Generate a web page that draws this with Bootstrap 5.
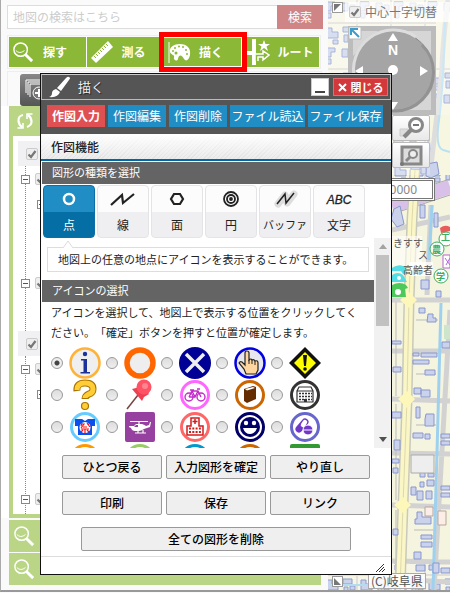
<!DOCTYPE html>
<html lang="ja">
<head>
<meta charset="utf-8">
<meta name="viewport" content="width=device-width, initial-scale=1">
<title>描く</title>
<link rel="stylesheet" href="https://cdn.jsdelivr.net/npm/bootstrap@5.3.0/dist/css/bootstrap.min.css">
<style>
body{font-family:"Noto Sans CJK JP",sans-serif;font-size:12px;line-height:16px;color:#222;background:#fafafa;overflow-x:hidden;text-spacing-trim:space-all}
svg{display:block;flex:none}
.stage{min-height:590px;border-left:1px solid #aaa;border-bottom:2px solid #999}
.side{padding:5px 6px 0 6px;min-width:0}
.search-box{height:24px;margin-right:-1px}
.search-box input{border:1px solid #ddd;border-right:0;font-size:12px;padding:0 5px;min-width:0;background:#fff}
.search-box input::placeholder{color:#ccc}
.search-box button{border:0;background:#cf8586;color:#fff;width:46px}
.main-nav{border:1px solid #eee;padding:1px;gap:1px;margin-top:6px;height:34px;margin-right:1px}
.main-nav button{flex:1 1 0;border:0;background:#8bb837;color:#fff;font-weight:700;padding:0 0 0 3px;gap:8px;white-space:nowrap}
.main-nav .picked{outline:5px solid #f00;outline-offset:0;position:relative;z-index:2;border:1px solid #fff;border-left:0}
.tool-strip{border:1px solid #eee;border-bottom:0;height:35px;margin-top:2px;padding:2px 12px}
.tool-strip button{width:31px;height:32px;border:0;border-radius:3px;padding:5px;background:linear-gradient(#888,#555)}
.tree-panel{background:#b9d585;padding:0 4px 4px;margin:0 1px 0 2px}
.white-gutter{background:#fff;margin:0 0 0 -6px;padding-left:6px}
.refresh{display:block;height:30px;border:0;background:none;padding:0 3px}
.tree{background:#fff;height:378px;padding-top:5px;overflow:hidden}
.tree-head{height:25px;background:#f1f0f2;margin-left:5px;padding-left:8px}
.tree ul{margin:0 0 0 12px;padding:0;border-left:1px dotted #888;list-style:none}
.tree li{height:26px;display:flex;align-items:center;gap:5px;margin-left:-5px}
.tree li.sub{margin-left:11px;height:24px}
.tree .first-list{height:165px}
.tree .second-list{height:160px}
.gap-a{margin-bottom:54px}
.gap-b{margin-bottom:80px}
.fold{width:9px;height:9px;border:1px solid #888;background:linear-gradient(#555,#555) center/5px 1px no-repeat #fff;padding:0;display:block}
.tick{appearance:none;width:12px;height:12px;margin:0;border:1px solid #ccc;border-radius:2px;background:#eee url("data:image/svg+xml,%3Csvg xmlns='http://www.w3.org/2000/svg' viewBox='0 0 10 10'%3E%3Cpath d='M1.5 5.5 4 8 8.500 2' fill='none' stroke='%23777' stroke-width='2.200'/%3E%3C/svg%3E") center/10px no-repeat;flex:none}
.more-row{border:0;height:32px;background:#b9d585;padding:0 4px;margin:2px 1px 0 2px}
.more-row+.more-row{margin-top:1px}
.map{width:122px;flex:none;background:#f5f4df;overflow:hidden}
.map-canvas{width:100%;height:590px}
.over{position:absolute}
.corner{left:4px;width:11px;height:11px;border:1px solid #999;background:#fff;padding:0}
.corner-top{top:2px}
.corner-low{top:576px}
.cross{left:17px;top:2px;width:105px;height:20px;padding-left:4px;background:rgba(255,255,255,.72);color:#777;gap:4px}
.compass{left:20px;top:26px}
.zoomers{left:64px;top:115px;width:38px}
.zoomers button{height:26px;border:1px solid #bbb;border-radius:2px;padding:0 0 0 6px;background:linear-gradient(#fff,#e8e8e8);margin-bottom:1px}
.scale{left:20px;top:178px;width:87px;height:23px;border:3px double #777;padding:0 15px 0 0;text-align:right;font-family:"Noto Sans","Noto Sans CJK JP",sans-serif;font-size:12px;color:#888;background:#fff}
.credit{left:40px;top:573px;height:16px;line-height:14px;border:1px solid #aaa;background:rgba(255,255,255,.85);padding:0 2px;color:#555;white-space:nowrap}
/* floating drawing window */
.draw-win{left:39px;top:73px;width:352px;border:1px solid #111;background:#fff;z-index:5}
.win-title{height:26px;background:#555;border:1px solid #bbb;border-top-color:#ccc;padding:0 2px 0 6px;color:#fff;font-size:13px}
.win-title h1{font-size:13px;line-height:16px;margin:0 0 0 8px;font-weight:400;color:#eee;text-shadow:1px 1px 1px #222}
.mini{width:18px;height:18px;border:1px solid #ccc;background:#fff;padding:9px 2px 0}
.mini span{display:block;height:2px;background:#444;margin:0 1px}
.shut{width:55px;height:18px;border:1px solid #e66a6c;background:#d2383c;color:#fff;font-size:11px;line-height:14px;font-weight:700;padding:0;gap:4px}
.modes{background:#555;padding:5px 6px 7px;gap:3px}
.modes button{border:0;height:22px;line-height:20px;background:#208dc4;color:#fff;padding:0;width:58px;white-space:nowrap}
.modes .wide{width:75px}
.modes .on{background:#de5052;font-weight:700}
.func{height:27px;line-height:25px;border-bottom:2px solid #0069a3;padding-left:10px;margin:0 0 1px;font-size:12px;font-weight:500;background:linear-gradient(rgba(255,255,255,1),rgba(255,255,255,0)),repeating-linear-gradient(135deg,#e2e2e2 0 1px,#ececec 1px 3px)}
.band{height:22px;line-height:21px;font-size:11px;font-weight:400;background:#646464;color:#fff;margin:0 0 0 1px;padding-left:10px}
.shapes{padding:1px 2px 0;gap:2px;height:54px}
.shapes button{width:52px;height:53px;border:1px solid #e4e4e6;border-radius:4px;padding:0;color:#222;font-size:12px;line-height:25px;background:linear-gradient(#fcfcfc 26px,#efeff2 26px)}
.shapes button svg{height:26px;width:50px}
.shapes .on{border-color:#0b70aa;color:#fff;background:linear-gradient(#208dc4 26px,#056ea5 26px)}
.shapes .slim{font-size:11px}
.pane{height:210px;overflow:hidden}
.note{border:1px solid #ddd;margin:9px 5px 8px 6px;height:25px;line-height:23px;font-size:11px;padding-left:10px;position:relative;white-space:nowrap}
.note svg{position:absolute;left:14px;top:-8px}
.pane p{font-size:11px;line-height:20px;margin:0 10px 5px 10px;white-space:nowrap}
.marks{display:grid;grid-template-columns:repeat(5,55px);padding-left:10px}
.marks label{display:flex;align-items:center;gap:6px;height:32px}
.marks input{appearance:none;width:12px;height:12px;margin:0;border:1px solid #999;border-radius:50%;background:linear-gradient(#ddd,#eee);flex:none}
.marks input:checked{background:radial-gradient(circle,#444 0 2px,#eee 3px)}
.bar{width:17px;background:#f1f1f1;padding:0 2px}
.bar i{display:block;height:71px;background:#c1c1c1}
.acts{padding:7px 21px 5px;display:grid;grid-template-columns:repeat(3,1fr);gap:12px 4px}
.acts button{height:24px;line-height:20px;border:1px solid #999;border-radius:2px;background:#efefef;color:#000;padding:0;font-weight:500}
.acts .all{grid-column:1/4;margin:0 19px}
.win-foot{height:18px;border-top:1px solid #ddd;padding:0 6px 2px}
</style>
<script src="https://cdn.jsdelivr.net/npm/bootstrap@5.3.0/dist/js/bootstrap.bundle.min.js"></script>
</head>
<body>
<svg width="0" height="0" class="position-absolute" aria-hidden="true">
<symbol id="lens" viewBox="0 0 24 24"><circle cx="9" cy="9" r="7" fill="none" stroke="#fff" stroke-width="1.500"/><path d="M4 10q4 4 9 0" fill="none" stroke="#fff"/><path d="m14 14 7 7" stroke="#fff" stroke-width="3"/></symbol>
</svg>
<div class="stage d-flex position-relative">
<div class="side flex-grow-1">
  <form class="search-box d-flex">
    <input type="text" class="flex-grow-1" placeholder="地図の検索はこちら" aria-label="地図の検索">
    <button type="button">検索</button>
  </form>
  <nav class="main-nav d-flex">
    <button type="button" class="d-flex align-items-center"><svg width="23" height="23"><use href="#lens"/></svg>探す</button>
    <button type="button" class="d-flex align-items-center"><svg width="24" height="24" viewBox="0 0 24 24"><path d="M1 18 18 1l5 6L6 23Z" fill="#fff"/><path d="m4 16 2 2m0-4 2 2m0-4 2 2m0-4 2 2m0-4 2 2m0-4 2 2m0-4 2 2" stroke="#8bb837"/></svg>測る</button>
    <button type="button" class="picked d-flex align-items-center"><svg width="24" height="24" viewBox="0 0 24 24"><path d="M2 2v21" stroke="#fff"/><path d="M3 12c-1-5 4-8 10-8 7 0 11 4 10 11-1 5-4 7-6 4-2-4-5-5-6 0-1 3-5 1-4-2 1-2-3-2-4-5Z" fill="#fff"/><g fill="#8bb837"><circle cx="6" cy="11" r="1"/><circle cx="8" cy="8" r="1"/><circle cx="12" cy="6.500" r="1"/><circle cx="16" cy="7" r="1"/><circle cx="19" cy="10" r="1"/><circle cx="20" cy="14" r="1"/><circle cx="9" cy="13" r="1.500"/></g></svg>描く</button>
    <button type="button" class="d-flex align-items-center"><svg width="24" height="28" viewBox="0 0 24 28"><path d="M8 1v26M1 15h7" stroke="#fff" stroke-width="4"/><path d="M9 23v-7h8v-3l6 4-6 5v-3h-5v4" fill="#8bb837" stroke="#fff" stroke-width="1.500"/><path d="m18 2 1.500 4H24l-3.500 2.500L22 13l-4-3-4 3 1.500-4.500L12 6h4.500Z" fill="#fff"/></svg>ルート</button>
  </nav>
  <div class="tool-strip"><button type="button" aria-label="レイヤ追加"><svg width="22" height="22" viewBox="0 0 22 22" fill="none" stroke="#fff"><path d="M1 14V1h16M3 16V3h16M5 18V5h15v13"/><circle cx="14" cy="14" r="6" fill="#777"/><path d="M14 10v8m-4-4h8" stroke-width="2"/></svg></button></div>
  <div class="white-gutter">
  <div class="tree-panel">
    <button type="button" class="refresh" aria-label="更新"><svg width="18" height="18" viewBox="0 0 18 18" fill="none" stroke="#fff" stroke-width="2.200"><path d="M7 3Q2 4 2.500 9q.5 4 3.500 6M11 15q5-2 4.500-6-.5-4-3.500-6"/><path d="M1.500 16H7v-5M16.500 2H11v5" stroke-width="1.600"/></svg></button>
    <div class="tree">
      <div class="tree-head d-flex align-items-center"><input type="checkbox" class="tick" checked aria-label="グループ1"></div>
      <ul class="first-list">
        <li><button type="button" class="fold" aria-label="閉じる"></button><input type="checkbox" class="tick" checked aria-label="レイヤ1"></li>
        <li class="sub gap-a"><button type="button" class="fold" aria-label="開く"></button></li>
        <li><button type="button" class="fold" aria-label="閉じる"></button><input type="checkbox" class="tick" checked aria-label="レイヤ2"></li>
      </ul>
      <div class="tree-head d-flex align-items-center"><input type="checkbox" class="tick" checked aria-label="グループ2"></div>
      <ul class="second-list">
        <li><button type="button" class="fold" aria-label="閉じる"></button><input type="checkbox" class="tick" checked aria-label="レイヤ3"></li>
        <li class="sub gap-b"><button type="button" class="fold" aria-label="開く"></button></li>
        <li><button type="button" class="fold" aria-label="閉じる"></button><input type="checkbox" class="tick" checked aria-label="レイヤ4"></li>
      </ul>
    </div>
  </div>
  </div>
  <div class="d-flex flex-column">
    <button type="button" class="more-row" aria-label="検索1"><svg width="23" height="23"><use href="#lens"/></svg></button>
    <button type="button" class="more-row" aria-label="検索2"><svg width="23" height="23"><use href="#lens"/></svg></button>
  </div>
</div>

<div class="map position-relative">
<svg class="map-canvas" viewBox="328 0 122 590" preserveAspectRatio="xMinYMin slice" role="img" aria-label="地図">
  <defs>
    <pattern id="blocks" width="34" height="46" patternUnits="userSpaceOnUse"><path d="M0 0h34v46H0Z" fill="#f7f6e6"/><path d="M0 23h34M17 0v46" stroke="#e0dfd8" stroke-width="2"/><path d="M2 3h6v8H2ZM10 5h5v5h-5ZM20 2h9v4h-4v5h-5ZM21 13h4v5h-4ZM3 27h9v5H3ZM4 35h4v7H4ZM10 34h5v4h-5ZM21 28h5v4h6v6H21ZM27 40h5v4h-5Z" fill="#cad3eb" stroke="#8c9bcf"/></pattern>
  </defs>
  <path d="M328 0h122v590H328Z" fill="#f5f4df"/>
  <path d="M328 0h122v185H328ZM328 560h122v30H328Z" fill="url(#blocks)"/>
  <path d="M425 105h25v70h-15ZM436 20h14v40h-14Z" fill="#f7f6e0"/>
  <path d="M448 0q-6 50-6 70-5 45-12 105" fill="none" stroke="#ddd" stroke-width="5"/>
  <path d="M445 22q-2 70-6 98t4 30l7 2" fill="none" stroke="#b9e1f2" stroke-width="2"/>
  <path d="m392 206 58-19" stroke="#d9c0e8" stroke-width="14"/><path d="m392 198 58-19M392 214l58-19" stroke="#aaa"/>
  <path d="m392 230 58-13M392 300h58M392 351h58M392 399l58 2M392 453l58 1M392 505l58 2M392 561l58 1M392 579l58 3M431 205l-4 90M450 310l-16 280" stroke="#d2d2d2" stroke-width="5" fill="none"/>
  <path d="M396 302v94M396 404v96M396 510v75M416 320h22M416 374h20M416 425h20M416 470h18M414 530h20" stroke="#bbb" fill="none"/>
  <path d="m432 205-3 55M441 303l-4 150-4 137" stroke="#9ed1ef" stroke-width="3" fill="none"/>
  <path d="m415 170-3 50-3 80-2 100-4 105-3 85" fill="none" stroke="#c9c9bb" stroke-width="11"/>
  <path d="m415 170-3 50-3 80-2 100-4 105-3 85" fill="none" stroke="#fbf6c6" stroke-width="8"/>
  <path d="m415 170-3 50-3 80-2 100-4 105-3 85" fill="none" stroke="#ddd9ae"/>
  <path d="m409 292 8 8-8 8-9-8ZM407 391l8 8-8 9-9-9ZM403 497l8 8-8 8-9-8Z" fill="#fdf8b9"/>
  <g fill="#cad3eb" stroke="#8997ce">
    <path d="m427 164 10-2 2 12-8 4-5-2ZM394 209l6-3 4 18-7 3-6-8ZM420 205h5v13h-5ZM421 165h5v9h-5ZM434 213h4v14h-4Z"/>
    <path d="M421 280h8v9h-8ZM436 291h5v6h-5ZM419 308h6v5h-6ZM428 314h5v4h3v4h-9ZM392 341h9v3h-9ZM413 353h6v3h-6ZM421 353h16v4h-16ZM413 360h16v4h-16ZM425 370h10v5h-10ZM442 342h8v6h-8ZM393 367h8v5h-8ZM414 388h7v6h-7ZM421 390h9v7h-9ZM416 407h4v11h-4ZM426 414h8v12h-9v-7ZM392 412h9v6h-9ZM394 440h6v10h-6ZM413 433h10v5h-10ZM425 434h5v5h-5ZM441 434h9v4h-9ZM441 441h9v4h-9ZM392 459h7v4h-7ZM393 468h5v5h-5ZM420 472h5v5h-5ZM428 473h6v4h-6ZM420 482h4v5h-4ZM427 480h7v6h-7ZM411 487h5v8h-5ZM417 491h6v9h-6ZM426 491h6v8h-6ZM441 486h9v4h-9ZM441 493h9v4h-9ZM417 512h5v5h9v7h-16v-5h2ZM393 529h5v6h-5ZM421 535h11v4h-11ZM421 542h11v5h-11ZM414 552h7v7h-7ZM416 565h9v6h-9ZM433 563h6v10h-6ZM441 568h9v5h-9Z"/>
  </g>
  <path d="M411 455h23v18h-23Z" fill="#eee" stroke="#aaa"/><path d="M438 511h8v14h-8ZM425 507h8v9h-8Z" fill="#fbeee6" stroke="#b9a5a0"/><path d="M444 325h6v14h-6Z" fill="#cde5cb"/><path d="m330 560 60 12M330 585h60" stroke="#b4dcef" stroke-width="2"/>
  <path d="M392 236h30v30h-30Z" fill="#fff" opacity=".6"/>
  <path d="M409 262h24v14h-24Z" fill="#fff" opacity=".8"/>
  <g fill="#54dde5"><path d="M392 268q7-5 13-1l2 6-4 1-2-3h-9ZM392 275q6-4 11 0l4 7h-15Z"/><circle cx="399" cy="278" r="2" fill="#fff"/></g>
  <g fill="#4cc95a"><path d="M392 285q8-4 14 0l2 3-3 1 1 8h-14Z"/><circle cx="398" cy="292" r="3" fill="#fff"/></g>
  <g font-family="Noto Sans CJK JP,sans-serif" font-size="10" fill="#555"><text x="393" y="247">きすす</text><text x="418" y="259">ス</text><text x="403" y="274">高齢者</text></g>
  <g font-family="Noto Sans CJK JP,sans-serif" font-size="9" font-weight="700" fill="#3cad63"><g fill="#fff" stroke="#3cad63"><circle cx="446" cy="239" r="7"/><circle cx="437" cy="249" r="7"/><circle cx="441" cy="276" r="7"/></g><path d="M440 228q5-4 10-1v4l-9 2Z" fill="#e85c5c"/><text x="432" y="253">農</text><text x="436" y="280">学</text><text x="441" y="241">工</text><path d="M443 255h7v13h-7Z" fill="#fff" stroke="#b566d8"/><path d="m445 258 5 7m0-7-4 7" stroke="#b566d8"/></g>
  <path d="M328 0h122v115h-20v60h-38v-60h-64Z" fill="#fff" opacity=".25"/>
</svg>
<button type="button" class="corner corner-top over" aria-label="開閉"><svg width="9" height="9"><path d="M1 1h7L1 8Z" fill="#777"/></svg></button>
<div class="cross over d-flex align-items-center"><input type="checkbox" class="tick" id="cross" checked><label for="cross" class="text-nowrap">中心十字切替</label></div>
<svg class="compass over" width="88" height="89" viewBox="0 0 88 89">
  <path d="M0 0h88v89H0Z" fill="#bcbcbc"/><path d="M5 5h25L5 30ZM58 5h25v25ZM5 59v25h25ZM83 59v25H58Z" fill="#d6d6d6"/>
  <circle cx="45" cy="45" r="40" fill="#a5a5a5" stroke="#898989"/><path d="M7 55A40 40 0 0 1 68 11" fill="none" stroke="#ddd" stroke-width="3"/><path d="M74 19A38 38 0 0 1 20 74" fill="none" stroke="#939393" stroke-width="3"/>
  <path d="m45 7 5 8H40ZM45 84l5-8H40ZM80 45l-8-5v10ZM7 45l8-5v10Z" fill="#fff"/><circle cx="45" cy="44" r="5" fill="#fff"/>
  <text x="45" y="29" text-anchor="middle" font-family="Liberation Sans,sans-serif" font-weight="700" font-size="14" fill="#fff">N</text>
  <path d="M1 1h12v12H1Z" fill="#fff" stroke="#bbb"/><path d="M3 9V3h7M4 4l7 7" stroke="#3f9cc9" stroke-width="2" fill="none"/>
</svg>
<div class="zoomers over d-flex flex-column">
  <button type="button" aria-label="縮小"><svg width="26" height="24" viewBox="0 0 26 24"><path d="M1 13h8v7H1Z" fill="#ddd" stroke="#ccc"/><circle cx="17" cy="9" r="6.500" fill="#fff" stroke="#888" stroke-width="3"/><path d="M14 9h6" stroke="#777" stroke-width="2"/><path d="m12 14-7 7" stroke="#888" stroke-width="4"/></svg></button>
  <button type="button" aria-label="範囲拡大"><svg width="26" height="24" viewBox="0 0 26 24"><path d="M3 4h19v17H3Z" fill="#ddd" stroke="#888" stroke-width="3"/><circle cx="14" cy="11" r="4" fill="#eee" stroke="#888" stroke-width="2"/><path d="m11 14-4 4" stroke="#888" stroke-width="3"/><circle cx="3" cy="21" r="2" fill="#777"/></svg></button>
</div>
<input type="text" class="scale over" value="10000" aria-label="縮尺">
<button type="button" class="corner corner-low over" aria-label="開閉"><svg width="9" height="9"><path d="M1 1v7h7Z" fill="#777"/></svg></button>
<div class="credit over">(C)岐阜県</div>
</div>

<section class="draw-win over">
  <header class="win-title d-flex align-items-center">
    <svg width="22" height="22" viewBox="0 0 22 22" fill="#fff"><path d="M21 1q2 1 0 3l-8 11-4-3 9-10q2-2 3-1ZM8 13l4 3q-2 6-11 5 3-1 3-4t4-4Z"/></svg>
    <h1>描く</h1>
    <button type="button" class="mini ms-auto" aria-label="最小化"><span></span></button>
    <button type="button" class="shut d-flex align-items-center justify-content-center ms-1"><svg width="9" height="9" viewBox="0 0 9 9"><path d="m1 1 7 7M8 1 1 8" stroke="#fff" stroke-width="2"/></svg>閉じる</button>
  </header>
  <div class="modes d-flex"><button type="button" class="on">作図入力</button><button type="button">作図編集</button><button type="button">作図削除</button><button type="button" class="wide">ファイル読込</button><button type="button" class="wide">ファイル保存</button></div>
  <h2 class="func">作図機能</h2>
  <h3 class="band">図形の種類を選択</h3>
  <div class="shapes d-flex">
    <button type="button" class="on"><svg viewBox="0 0 50 26"><circle cx="25" cy="13" r="5" fill="none" stroke="#fff" stroke-width="2.500"/></svg>点</button>
    <button type="button"><svg viewBox="0 0 50 26"><path d="m13 19 11-10 1 8L36 8" fill="none" stroke="#222" stroke-width="2.200"/></svg>線</button>
    <button type="button"><svg viewBox="0 0 50 26"><path d="m22 8-3 5 3 5h6l3-5-3-5Z" fill="none" stroke="#222" stroke-width="2.200"/></svg>面</button>
    <button type="button"><svg viewBox="0 0 50 26" fill="none" stroke="#222" stroke-width="1.800"><circle cx="25" cy="13" r="7"/><circle cx="25" cy="13" r="4"/><circle cx="25" cy="13" r="1"/></svg>円</button>
    <button type="button" class="slim"><svg viewBox="0 0 50 26" fill="none"><path d="m18 18 7-9 2 8 7-9" stroke="#ddd" stroke-width="7" stroke-linecap="round" stroke-linejoin="round"/><path d="m17 18 8-10 1 9 8-10" stroke="#222" stroke-width="1.500"/></svg>バッファ</button>
    <button type="button"><svg viewBox="0 0 50 26"><text x="25" y="18" text-anchor="middle" font-family="Liberation Sans,sans-serif" font-style="italic" font-size="12" fill="#222" stroke="#222" stroke-width=".3">ABC</text></svg>文字</button>
  </div>
  <div class="pane d-flex">
    <div class="flex-grow-1">
      <div class="note"><svg width="12" height="9"><path d="m1 8 5-7 5 7" fill="#fff" stroke="#ddd"/></svg>地図上の任意の地点にアイコンを表示することができます。</div>
      <h3 class="band">アイコンの選択</h3>
      <p>アイコンを選択して、地図上で表示する位置をクリックしてく<br>ださい。「確定」ボタンを押すと位置が確定します。</p>
      <div class="marks">
        <label><input type="radio" name="mk" checked aria-label="情報"><svg width="32" height="32" viewBox="0 0 32 32"><circle cx="16" cy="16" r="14.500" fill="#efefef" stroke="#ffb237" stroke-width="2.500"/><circle cx="16" cy="7" r="2.200" fill="#1a3299"/><path d="M12 12h6v13h3v1.500H11.500V25h3V13.500H12Z" fill="#1a3299"/></svg></label>
        <label><input type="radio" name="mk" aria-label="丸"><svg width="32" height="32" viewBox="0 0 32 32"><circle cx="16" cy="16" r="13" fill="#eee" stroke="#ff6600" stroke-width="5.500"/></svg></label>
        <label><input type="radio" name="mk" aria-label="ばつ"><svg width="32" height="32" viewBox="0 0 32 32"><circle cx="16" cy="16" r="16" fill="#000096"/><path d="m7 7 18 18M25 7 7 25" stroke="#eee" stroke-width="3.500"/></svg></label>
        <label><input type="radio" name="mk" aria-label="指"><svg width="32" height="32" viewBox="0 0 32 32"><circle cx="16" cy="16" r="14.500" fill="#e7e7ee" stroke="#0000e0" stroke-width="2.500"/><path d="M11 18V6q0-2 2-2t2 2v7q2-2 3 0 2-1 3 1 3-1 3 2v7l-2 4H12L10 22l-5-6q1-2 3-1Z" fill="#ffd5a0" stroke="#222" stroke-width="1.200"/><path d="M15 13v4m3-4v4m3-3v4" stroke="#222"/></svg></label>
        <label><input type="radio" name="mk" aria-label="注意"><svg width="32" height="32" viewBox="0 0 32 32"><path d="m16 0 16 16-16 16L0 16Z" fill="#111"/><path d="m16 5 11 11-11 11L5 16Z" fill="#ff0"/><path d="M14 8h4l-1 11h-2Z" fill="#111"/><circle cx="16" cy="22" r="1.800" fill="#111"/></svg></label>

        <label><input type="radio" name="mk" aria-label="疑問"><svg width="32" height="32" viewBox="0 0 32 32"><path d="M8 12q-1-8 8-8 8 0 8 6 0 4-4 5-4 2-4 5" fill="none" stroke="#a77400" stroke-width="7"/><path d="M8 11q0-7 8-7 8 0 8 6 0 4-4 5-4 2-4 4" fill="none" stroke="#ffcd35" stroke-width="5"/><circle cx="16" cy="27" r="3.500" fill="#ffcd35" stroke="#a77400" stroke-width="1.200"/></svg></label>
        <label><input type="radio" name="mk" aria-label="ピン"><svg width="32" height="32" viewBox="0 0 32 32"><path d="M3 30 14 16" stroke="#744" stroke-width="1.500"/><path d="m8 10 4-1 6-3 7 9-5 3-2 4Z" fill="#ee4053"/><circle cx="20" cy="8" r="7.500" fill="#ff5264"/><circle cx="21" cy="7" r="3" fill="#ff8590"/></svg></label>
        <label><input type="radio" name="mk" aria-label="自転車"><svg width="32" height="32" viewBox="0 0 32 32"><circle cx="16" cy="16" r="13.500" fill="#fff" stroke="#ff66ff" stroke-width="3"/><g fill="none" stroke="#c32cc9" stroke-width="1.400"><circle cx="10" cy="18" r="4"/><circle cx="22" cy="18" r="4"/><path d="m10 18 3-6h6l3 6M13 12l3 6 3-6M11 11h4m3-1h3M10 18h6"/></g></svg></label>
        <label><input type="radio" name="mk" aria-label="本"><svg width="32" height="32" viewBox="0 0 32 32"><circle cx="16" cy="16" r="13.500" fill="#fff" stroke="#cc6600" stroke-width="3"/><path d="m10 10 9-3 3 1v12l-9 4-3-2Z" fill="#652c00"/><path d="m11 10 8-2 2 1-8 2.500Z" fill="#fff"/></svg></label>
        <label><input type="radio" name="mk" aria-label="建物"><svg width="32" height="32" viewBox="0 0 32 32"><circle cx="16" cy="16" r="13.500" fill="#fff" stroke="#333" stroke-width="3"/><path d="M10 8h12l2 4v11H8V12Z" fill="#fff" stroke="#333" stroke-width="1.200"/><path d="M8 12h16" stroke="#333"/><path d="M10 14.500h13M10 17.500h13M10 20.500h13" stroke="#333" stroke-width="1.600" stroke-dasharray="2 1"/><path d="M15 20h3v3h-3Z" fill="#333"/></svg></label>

        <label><input type="radio" name="mk" aria-label="祭"><svg width="32" height="32" viewBox="0 0 32 32"><circle cx="16" cy="16" r="13.500" fill="#fff" stroke="#66ccff" stroke-width="3"/><path d="M6 8h7l3 2 3-2h7v7h-3v9H9v-9H6Z" fill="#0a50ee"/><circle cx="16" cy="16.500" r="5.500" fill="#fff"/><g fill="none" stroke="#f11" stroke-width="1.200"><path d="m13 12-1 3m1-2h2l-3 4m6-5 3 4m-1-3h-2m-4 3h4m-6 2h8m-4 0v4m-2-3-2 2m6-2 2 2"/></g></svg></label>
        <label><input type="radio" name="mk" aria-label="ヘリ"><svg width="32" height="32" viewBox="0 0 32 32"><rect x="1" y="1" width="30" height="30" rx="2" fill="#9640a0"/><path d="M6 10.500h18M15 10v3M11 22h11M14 19v3m5-3v3" stroke="#fff" stroke-width="1.200"/><path d="M5 15h5l2-2h6q3 1 4 2l3-1 1-3h1l-1 5-6 2q-3 2-5 2h-4q-3 0-4-3l-2-1Z" fill="#fff"/><path d="M10 16l2-2h2v2Z" fill="#9640a0"/></svg></label>
        <label><input type="radio" name="mk" aria-label="病院"><svg width="32" height="32" viewBox="0 0 32 32"><circle cx="16" cy="16" r="13.500" fill="#fff" stroke="#ff6666" stroke-width="3"/><path d="M8 15h4V7h8v8h4v9H8Z" fill="#fff" stroke="#d11c1c" stroke-width="1.500"/><path d="M16 8v5m-2.500-2.500h5" stroke="#d11c1c" stroke-width="1.500"/><path d="M10 17.500h13M10 21h13" stroke="#d11c1c" stroke-width="2" stroke-dasharray="2 1.300"/></svg></label>
        <label><input type="radio" name="mk" aria-label="笑顔"><svg width="32" height="32" viewBox="0 0 32 32"><circle cx="16" cy="16" r="13.500" fill="#fff" stroke="#000066" stroke-width="3"/><circle cx="16" cy="16" r="10" fill="#000066"/><circle cx="12" cy="12" r="2.200" fill="#fff"/><circle cx="20" cy="12" r="2.200" fill="#fff"/><path d="M9 17h14q-2 6-7 6t-7-6Z" fill="#fff"/></svg></label>
        <label><input type="radio" name="mk" aria-label="薬"><svg width="32" height="32" viewBox="0 0 32 32"><circle cx="16" cy="16" r="13.500" fill="#fff" stroke="#6666cc" stroke-width="3"/><path d="m10 18 6-7" stroke="#7037c8" stroke-width="7" stroke-linecap="round"/><path d="m14 14 2-3" stroke="#fff" stroke-width="4.500" stroke-linecap="round"/><circle cx="19" cy="19" r="5" fill="#7037c8" stroke="#fff"/><path d="M14 19h10" stroke="#fff"/></svg></label>

        <label><input type="radio" name="mk" aria-label="橙"><svg width="32" height="32"><circle cx="16" cy="16" r="13.500" fill="#fff" stroke="#ff9900" stroke-width="3"/></svg></label>
        <label><input type="radio" name="mk" aria-label="黄緑"><svg width="32" height="32"><circle cx="16" cy="16" r="13.500" fill="#fff" stroke="#99cc66" stroke-width="3"/></svg></label>
        <label><input type="radio" name="mk" aria-label="青"><svg width="32" height="32"><circle cx="16" cy="16" r="13.500" fill="#fff" stroke="#0099cc" stroke-width="3"/></svg></label>
        <label><input type="radio" name="mk" aria-label="茶"><svg width="32" height="32"><circle cx="16" cy="16" r="13.500" fill="#fff" stroke="#cc6600" stroke-width="3"/></svg></label>
        <label><input type="radio" name="mk" aria-label="緑"><svg width="32" height="32"><rect x="1" y="1" width="30" height="30" rx="2" fill="#339933"/></svg></label>
      </div>
    </div>
    <div class="bar flex-shrink-0 d-flex flex-column"><svg width="13" height="17"><path d="m3 11 4-5 4 5Z" fill="#a3a3a3"/></svg><i></i><svg class="mt-auto" width="13" height="17"><path d="m3 6 4 5 4-5Z" fill="#505050"/></svg></div>
  </div>
  <div class="acts">
    <button type="button">ひとつ戻る</button><button type="button">入力図形を確定</button><button type="button">やり直し</button>
    <button type="button">印刷</button><button type="button">保存</button><button type="button">リンク</button>
    <button type="button" class="all">全ての図形を削除</button>
  </div>
  <footer class="win-foot d-flex justify-content-end align-items-end"><svg width="9" height="9"><path d="m0 9 8-8M3 9l5-5M6 9l3-3" stroke="#333"/></svg></footer>
</section>
</div>
</body>
</html>
